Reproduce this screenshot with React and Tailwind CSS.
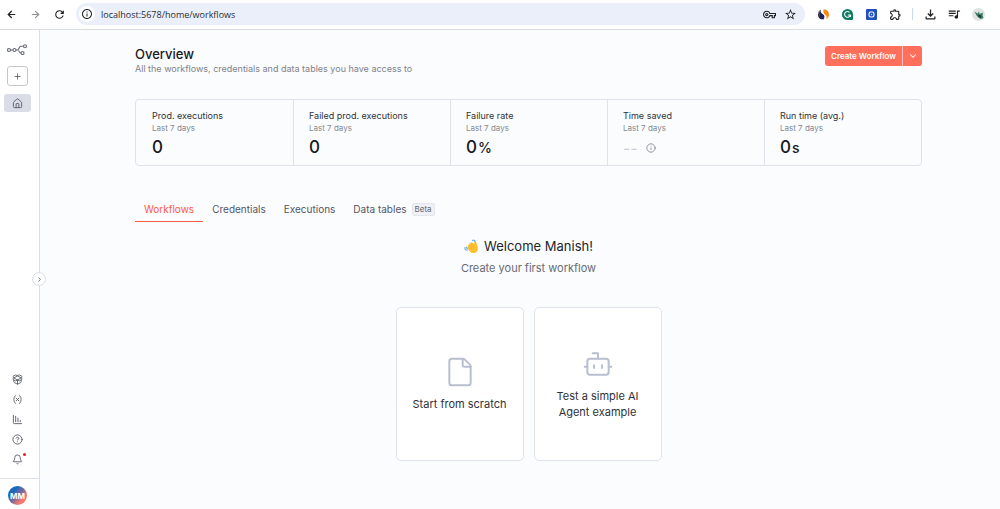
import { useState } from "react";
import {
  ArrowLeft,
  ArrowRight,
  Bell,
  Bot,
  ChartColumnDecreasing,
  ChevronDown,
  ChevronRight,
  CircleQuestionMark,
  File,
  House,
  Info,
  PackageOpen,
  Plus,
  Variable,
} from "lucide-react";
import {
  MdOutlineExtension,
  MdOutlineFileDownload,
  MdOutlineInfo,
  MdOutlineQueueMusic,
  MdOutlineVpnKey,
  MdRefresh,
  MdStarBorder,
} from "react-icons/md";

const stats = [
  { label: "Prod. executions", value: "0" },
  { label: "Failed prod. executions", value: "0" },
  { label: "Failure rate", value: "0", unit: "%" },
  { label: "Time saved", value: null },
  { label: "Run time (avg.)", value: "0", unit: "s" },
];

const tabs = [
  { name: "Workflows" },
  { name: "Credentials" },
  { name: "Executions" },
  { name: "Data tables", badge: "Beta" },
];

const footerLinks = [
  { name: "Templates", Icon: PackageOpen },
  { name: "Variables", Icon: Variable },
  { name: "Insights", Icon: ChartColumnDecreasing },
  { name: "Help", Icon: CircleQuestionMark },
  { name: "What's new", Icon: Bell, dot: true },
];

function BrowserBar() {
  return (
    <header className="flex h-[30px] shrink-0 items-center border-b border-[#d9dbdf] bg-white pb-px pl-[3px] pr-[14px] text-[#202124]">
      <div className="flex w-[73px] items-center gap-2">
        <button type="button" aria-label="Back" className="flex size-4 items-center justify-center">
          <ArrowLeft size={11} strokeWidth={2.6} />
        </button>
        <button type="button" aria-label="Forward" className="flex size-4 items-center justify-center text-[#8d9094]">
          <ArrowRight size={11} strokeWidth={2.4} />
        </button>
        <button type="button" aria-label="Reload" className="flex size-4 items-center justify-center">
          <MdRefresh size={13} />
        </button>
      </div>
      <div className="flex h-[22px] flex-1 items-center rounded-full bg-[#ebeff9] pl-[3px] pr-[7px]">
        <button type="button" aria-label="Site information" className="flex size-4 items-center justify-center rounded-full bg-white">
          <MdOutlineInfo size={12} />
        </button>
        <input
          type="text"
          aria-label="Address"
          defaultValue="localhost:5678/home/workflows"
          className="ml-[6px] h-4 min-w-0 flex-1 bg-transparent font-['Open_Sans',sans-serif] text-[9px] text-[#2b2d31] outline-none"
        />
        <button type="button" aria-label="Passwords" className="flex size-4 items-center justify-center">
          <MdOutlineVpnKey size={13} />
        </button>
        <button type="button" aria-label="Bookmark" className="ml-[5px] flex size-4 items-center justify-center">
          <MdStarBorder size={13} />
        </button>
      </div>
      <div className="ml-[10px] flex items-center gap-2">
        <button type="button" aria-label="Similarweb" className="flex size-4 items-center justify-center">
          <svg viewBox="0 0 20 20" className="size-[11px]">
            <path d="M4.500 2C1 4 0 9 3 12c3 2.500 6 2 7 6.500C3.500 20 0 15 0 10c0-4 2-7 4.500-8Z" fill="#1c2350" />
            <path d="M5 1.500C4 6 6 8 9 9.500c3.500 2 3.500 6 1 9.500C6 17 1 12 2 7c.5-3 1.500-4.500 3-5.500Z" fill="#1c2350" />
            <path d="M10 1c6-1 10 4 10 9 0 4-2 7-5 8.500 2-4 0-7-3-9C10 8 9 4 10 1Z" fill="#f98a10" />
          </svg>
        </button>
        <button type="button" aria-label="Grammarly" className="flex size-4 items-center justify-center">
          <svg viewBox="0 0 20 20" className="size-[11px]" fill="none">
            <path d="M10 0a10 10 0 0 1 10 10v8a2 2 0 0 1-2 2h-8a10 10 0 0 1 0-20Z" fill="#0b7a5f" />
            <path d="M13.500 6A5.200 5.200 0 1 0 15 11h-4.500M15.500 10.500v4" stroke="#fff" strokeWidth="2" />
          </svg>
        </button>
        <button type="button" aria-label="Screen capture" className="flex size-4 items-center justify-center">
          <svg viewBox="0 0 20 20" className="size-[11px]" fill="none">
            <rect width="20" height="20" rx="2" fill="#1f4fbf" />
            <rect x="5.500" y="5.500" width="9" height="9" rx="3" stroke="#fff" strokeWidth="2" />
            <circle cx="10" cy="10" r="1.500" fill="#9db8f2" />
          </svg>
        </button>
        <button type="button" aria-label="Extensions" className="flex size-4 items-center justify-center">
          <MdOutlineExtension size={13} />
        </button>
      </div>
      <div className="mx-[9px] h-3 w-px bg-[#c6dafc]" />
      <div className="flex items-center gap-2">
        <button type="button" aria-label="Downloads" className="flex size-4 items-center justify-center">
          <MdOutlineFileDownload size={15} />
        </button>
        <button type="button" aria-label="Media" className="flex size-4 items-center justify-center">
          <MdOutlineQueueMusic size={14} />
        </button>
        <button type="button" aria-label="Profile" className="flex size-4 items-center justify-center">
          <svg viewBox="0 0 26 26" className="size-[13px]">
            <circle cx="13" cy="13" r="13" fill="#dfe2e2" />
            <path d="m5 7 6 4 3-4 1 5 7-3-1 6 2 5-5 2-4-2-5-5Z" fill="#3c7f68" />
            <path d="m12 13 7 2-1 5-5-2Z" fill="#173d38" />
          </svg>
        </button>
      </div>
    </header>
  );
}

function Logo() {
  return (
    <svg viewBox="0 0 42 22" className="h-[11px] w-[21px]" fill="none" stroke="#6b6f78" strokeWidth="2.400">
      <circle cx="4" cy="12" r="3" />
      <circle cx="15" cy="12" r="3" />
      <circle cx="36" cy="4.500" r="3" />
      <circle cx="31" cy="18" r="3" />
      <path d="M7 12h5M18 12h3c4 0 2-7.500 7-7.500h5M21 12c4 0 2 6 7 6" />
    </svg>
  );
}

function Wave() {
  return (
    <svg viewBox="0 0 30 30" className="size-[15px]" fill="none" aria-hidden="true">
      <path
        d="M8 14c-1-2 1-3.500 2.500-2L11 12C9 8 11.500 6.500 13.500 9c-.5-3 2-3.500 3.500-1.500l3.500 4C20 8 20 4.500 22.500 4.500c2 0 2 3 3 6 2.500 6 3.500 10 .5 14-4 5-11 4.500-14 .5l-5-6.500c-1.500-2.500.5-3.500 1-2.500Z"
        fill="#fdbf2d"
      />
      <path d="m12 13 4 5M15 10l4 5M10 17l4 4" stroke="#f0a21a" strokeWidth="1" strokeLinecap="round" />
      <path d="M17 3c2-1.500 5 0 5 2M2 17c-1 3 1 5.500 4 5.500M5 16c0 2 0 3 2 4" stroke="#6db0ea" strokeWidth="2.400" strokeLinecap="round" />
    </svg>
  );
}

function Sidebar() {
  return (
    <aside className="relative flex w-10 shrink-0 flex-col border-r border-[#dcdee8] bg-white text-[#5c5f68]">
      <nav className="flex flex-1 flex-col items-center pl-1 pr-2 pt-[14px]">
        <a href="#home" aria-label="n8n">
          <Logo />
        </a>
        <button
          type="button"
          aria-label="Add"
          className="mt-[11px] flex h-5 w-[21px] items-center justify-center rounded-[3px] border border-[#c3c6d4] text-[#4a4d55]"
        >
          <Plus size={9} />
        </button>
        <a
          href="#overview"
          aria-label="Overview"
          className="mt-2 flex h-[18px] w-full items-center justify-center rounded-[3px] bg-[#dadde8]"
        >
          <House size={11} strokeWidth={2} />
        </a>
        <div className="mb-[9px] mt-auto flex flex-col">
          {footerLinks.map(({ name, Icon, dot }) => (
            <a key={name} href="#more" aria-label={name} className="relative flex h-5 w-5 items-center justify-center">
              <Icon size={11} strokeWidth={2} />
              {dot ? <span className="absolute right-0.5 top-1 size-[3px] rounded-full bg-[#ee1c25]" /> : null}
            </a>
          ))}
        </div>
      </nav>
      <div className="flex border-t border-[#dcdee8] px-2 pb-1 pt-[7px]">
        <button
          type="button"
          className="flex size-[19px] items-center justify-center rounded-full bg-linear-to-br from-[#1769bd] from-30% via-[#75679b] to-[#ff7769] to-75% text-[8px] font-bold text-white"
        >
          MM
        </button>
      </div>
      <button
        type="button"
        aria-label="Expand sidebar"
        className="absolute -right-[7px] top-[52%] flex size-[14px] -translate-y-1/2 items-center justify-center rounded-full border border-[#dcdee8] bg-white"
      >
        <ChevronRight size={7} strokeWidth={3} />
      </button>
    </aside>
  );
}

function StatCard({ label, value, unit }) {
  return (
    <li className="flex-1 border-l border-[#dfe2ec] pb-1 pl-[15px] pt-[9px] first:border-l-0 first:pl-4">
      <p className="text-[9px] leading-[14px] text-[#2f3237]">{label}</p>
      <p className="text-[8px] leading-[11px] text-[#85888f]">Last 7 days</p>
      {value === null ? (
        <p className="flex h-[27px] items-center gap-2 text-base text-[#cdd0dc]">
          <span>--</span>
          <Info size={10} className="text-[#7c7f87]" />
        </p>
      ) : (
        <p className="flex h-[27px] items-baseline text-[17px] font-medium leading-[27px] text-[#17191c]">
          {value}
          {unit ? <span className="ml-px text-sm">{unit}</span> : null}
        </p>
      )}
    </li>
  );
}

function StartCard({ Icon, children }) {
  return (
    <button
      type="button"
      className="flex h-[154px] w-32 flex-col items-center justify-center gap-2 rounded-[5px] border border-[#e0e3ec] bg-white px-4 text-[11px] leading-4 text-[#2f3237]"
    >
      <Icon size={32} strokeWidth={1.500} className="text-[#b9bfd0]" />
      <span>{children}</span>
    </button>
  );
}

export default function App() {
  const [activeTab, setActiveTab] = useState("Workflows");

  return (
    <div className="flex min-h-screen flex-col bg-[#fbfcfe] font-[Inter,sans-serif]">
      <BrowserBar />
      <div className="flex flex-1">
        <Sidebar />
        <main className="flex-1 pl-[95px] pr-[78px] pt-4">
          <div className="flex items-start justify-between">
            <div>
              <h1 className="text-[13px] font-medium leading-4 text-[#17191c]">Overview</h1>
              <p className="text-[9px] leading-[14px] text-[#7f828a]">
                All the workflows, credentials and data tables you have access to
              </p>
            </div>
            <div className="flex h-5 overflow-hidden rounded-[3px] bg-[#ff6f5c] text-white">
              <button type="button" className="px-[6px] text-[8px] font-semibold">
                Create Workflow
              </button>
              <button
                type="button"
                aria-label="More create options"
                className="flex w-5 items-center justify-center border-l border-[#ffc4bc]"
              >
                <ChevronDown size={10} strokeWidth={2.500} />
              </button>
            </div>
          </div>

          <ul className="mt-[23px] flex rounded-[4px] border border-[#dfe2ec]">
            {stats.map((stat) => (
              <StatCard key={stat.label} {...stat} />
            ))}
          </ul>

          <div role="tablist" className="mt-8 flex">
            {tabs.map(({ name, badge }) => (
              <button
                key={name}
                type="button"
                role="tab"
                aria-selected={name === activeTab}
                onClick={() => setActiveTab(name)}
                className={`flex h-6 items-center gap-[5px] border-b px-[9px] text-[10px] ${
                  name === activeTab ? "border-[#ff5a45] text-[#ff5a45]" : "border-transparent text-[#53565e]"
                }`}
              >
                {name}
                {badge ? (
                  <span className="rounded-[2px] border border-[#e4e6ee] bg-[#f0f1f7] px-[2px] text-[8px] leading-[11px] text-[#62656e]">
                    {badge}
                  </span>
                ) : null}
              </button>
            ))}
          </div>

          <section className="flex flex-col items-center pt-[15px]">
            <h2 className="flex items-center gap-[5px] text-[13px] leading-[18px] text-[#22252a]">
              <Wave />
              Welcome Manish!
            </h2>
            <p className="mt-1 text-[11px] leading-[18px] text-[#686b73]">Create your first workflow</p>
            <div className="mt-[30px] flex gap-[10px]">
              <StartCard Icon={File}>Start from scratch</StartCard>
              <StartCard Icon={Bot}>Test a simple AI Agent example</StartCard>
            </div>
          </section>
        </main>
      </div>
    </div>
  );
}
